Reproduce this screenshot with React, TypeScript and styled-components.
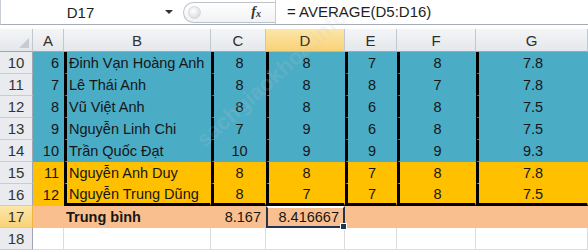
import React from "react";
import styled, { createGlobalStyle } from "styled-components";

const COLS = ["A", "B", "C", "D", "E", "F", "G"];
const WIDTHS = [33, 31, 147, 55, 79, 52, 79, 112];

const BLUE = "#4bacc6";
const ORANGE = "#ffc000";
const PEACH = "#fabf8f";

const rows = [
  { n: 10, bg: BLUE, v: ["6", "Đinh Vạn Hoàng Anh", "8", "8", "7", "8", "7.8"] },
  { n: 11, bg: BLUE, v: ["7", "Lê Thái Anh", "8", "8", "8", "7", "7.8"] },
  { n: 12, bg: BLUE, v: ["8", "Vũ Việt Anh", "8", "8", "6", "8", "7.5"] },
  { n: 13, bg: BLUE, v: ["9", "Nguyễn Linh Chi", "7", "9", "6", "8", "7.5"] },
  { n: 14, bg: BLUE, v: ["10", "Trần Quốc Đạt", "10", "9", "9", "9", "9.3"] },
  { n: 15, bg: ORANGE, v: ["11", "Nguyễn Anh Duy", "8", "8", "7", "8", "7.8"] },
  { n: 16, bg: ORANGE, v: ["12", "Nguyễn Trung Dũng", "8", "7", "7", "8", "7.5"] },
];

const App = () => {
  return (
    <>
      <GlobalStyle />
      <SheetS>
        <FormulaBarS>
          <NameBoxS>D17</NameBoxS>
          <DropArrowS />
          <FxGroupS>
            <KnobS />
            <FxS>
              f<sub>x</sub>
            </FxS>
          </FxGroupS>
          <FormulaInputS>= AVERAGE(D5:D16)</FormulaInputS>
        </FormulaBarS>
        <GapS />
        <GridS>
          <CornerS>
            <CornerMarkS />
          </CornerS>
          {COLS.map((c) => (
            <ColHeadS key={c} $active={c === "D"}>
              {c}
            </ColHeadS>
          ))}

          {rows.map((r, ri) => (
            <React.Fragment key={r.n}>
              <RowHeadS>{r.n}</RowHeadS>
              {r.v.map((val, ci) => (
                <CellS
                  key={ci}
                  $bg={r.bg}
                  $align={ci === 0 ? "right" : ci === 1 ? "left" : "center"}
                  $thickLeft={ci > 0}
                  $thickBottom={ri === rows.length - 1 && ci > 0}
                >
                  {val}
                </CellS>
              ))}
            </React.Fragment>
          ))}

          <RowHeadS $active>17</RowHeadS>
          <CellS $bg={PEACH} />
          <CellS $bg={PEACH} $align="left" $bold>
            Trung bình
          </CellS>
          <CellS $bg={PEACH} $align="right">
            8.167
          </CellS>
          <SelectedCellS $bg={PEACH} $align="right">
            8.416667
            <FillHandleS />
          </SelectedCellS>
          <CellS $bg={PEACH} />
          <CellS $bg={PEACH} />
          <CellS $bg={PEACH} />

          <RowHeadS>18</RowHeadS>
          {COLS.map((c) => (
            <CellS key={c} />
          ))}
        </GridS>
        <WatermarkS>sachgiaokhoa.info</WatermarkS>
      </SheetS>
    </>
  );
};

//style-----------------------------------------
const GlobalStyle = createGlobalStyle`
  body {
    margin: 0;
    background: #ffffff;
    font-family: "Liberation Sans", Arial, sans-serif;
  }
`;
const SheetS = styled.div`
  width: 588px;
  height: 252px;
  overflow: hidden;
  position: relative;
  background: #ffffff;
`;
const FormulaBarS = styled.div`
  display: flex;
  align-items: center;
  height: 24px;
  border-bottom: 1px solid #a5acb5;
  border-left: 1px solid #c9ced6;
  background: #ffffff;
`;
const NameBoxS = styled.div`
  width: 159px;
  text-align: center;
  font-size: 15px;
  color: #1e1e1e;
`;
const DropArrowS = styled.div`
  width: 0;
  height: 0;
  margin-left: 5px;
  border-left: 4px solid transparent;
  border-right: 4px solid transparent;
  border-top: 4px solid #333;
`;
const FxGroupS = styled.div`
  display: flex;
  align-items: center;
  justify-content: space-between;
  margin-left: 10px;
  width: 92px;
  height: 21px;
  box-sizing: border-box;
  border: 1px solid #bcc2ca;
  border-right: none;
  border-radius: 11px 0 0 11px;
  background: linear-gradient(#ffffff, #f1f2f4);
  padding: 0 14px 0 4px;
`;
const KnobS = styled.div`
  width: 11px;
  height: 11px;
  border-radius: 50%;
  background: radial-gradient(circle at 40% 35%, #ffffff, #cfd3d8);
  border: 1px solid #d6d9de;
`;
const FxS = styled.div`
  font-family: "Liberation Serif", "Times New Roman", serif;
  font-style: italic;
  font-weight: bold;
  font-size: 14px;
  color: #333;
  sub {
    font-size: 10px;
    vertical-align: -1px;
  }
`;
const FormulaInputS = styled.div`
  flex: 1;
  height: 24px;
  line-height: 24px;
  border-left: 1px solid #c6cbd2;
  padding-left: 11px;
  font-size: 15px;
  color: #1e1e1e;
`;
const GapS = styled.div`
  height: 4px;
  background: #ffffff;
`;
const GridS = styled.div`
  display: grid;
  grid-template-columns: ${WIDTHS.map((w) => `${w}px`).join(" ")};
  grid-template-rows: 23px repeat(9, 22px);
  font-size: 14.5px;
`;
const CornerS = styled.div`
  position: relative;
  background: linear-gradient(#f4f5f7, #e4e7eb);
  border-right: 1px solid #c3c8d0;
  border-bottom: 1px solid #9ea7b3;
`;
const CornerMarkS = styled.div`
  position: absolute;
  right: 3px;
  bottom: 3px;
  width: 0;
  height: 0;
  border-left: 10px solid transparent;
  border-bottom: 10px solid #c8ccd2;
`;
const ColHeadS = styled.div<{ $active?: boolean }>`
  display: flex;
  align-items: center;
  justify-content: center;
  box-sizing: border-box;
  font-size: 15px;
  background: ${(p) =>
    p.$active
      ? "linear-gradient(#fce6a9, #f9d277)"
      : "linear-gradient(#f4f5f7, #e4e7eb)"};
  border-right: 1px solid #c3c8d0;
  border-bottom: 1px solid ${(p) => (p.$active ? "#f2b33d" : "#9ea7b3")};
  color: #2f2f2f;
`;
const RowHeadS = styled.div<{ $active?: boolean }>`
  display: flex;
  align-items: center;
  justify-content: center;
  box-sizing: border-box;
  font-size: 15px;
  background: ${(p) =>
    p.$active ? "linear-gradient(#fce6a9, #f9d277)" : "#e9ebee"};
  border-right: 1px solid ${(p) => (p.$active ? "#f2b33d" : "#9ea7b3")};
  border-bottom: 1px solid #c8cdd4;
  color: #333;
`;
const CellS = styled.div<{
  $bg?: string;
  $align?: "left" | "right" | "center";
  $thickLeft?: boolean;
  $thickBottom?: boolean;
  $bold?: boolean;
}>`
  display: flex;
  align-items: center;
  justify-content: ${(p) =>
    p.$align === "left" ? "flex-start" : p.$align === "right" ? "flex-end" : "center"};
  box-sizing: border-box;
  padding: 0 4px 0 ${(p) => (p.$align === "left" ? "2px" : "4px")};
  white-space: nowrap;
  background: ${(p) => p.$bg || "#ffffff"};
  color: #161616;
  font-weight: ${(p) => (p.$bold ? "bold" : "normal")};
  border-right: 1px solid ${(p) => p.$bg || "#dadcdf"};
  border-bottom: 1px solid ${(p) => p.$bg || "#dadcdf"};
  ${(p) => (p.$thickLeft ? "border-left: 3px solid #000;" : "")}
  ${(p) => (p.$thickBottom ? "border-bottom: 3px solid #000;" : "")}
`;
const SelectedCellS = styled(CellS)`
  position: relative;
  border: 2px solid #1f3550;
  border-top-color: #ffffff;
  padding-right: 4px;
`;
const FillHandleS = styled.div`
  position: absolute;
  right: -4px;
  bottom: -4px;
  width: 5px;
  height: 5px;
  background: #1f3550;
  border: 1px solid #ffffff;
`;
const WatermarkS = styled.div`
  position: absolute;
  left: 200px;
  top: 130px;
  transform: rotate(-42deg);
  transform-origin: left center;
  font-size: 22px;
  font-weight: bold;
  color: rgba(200, 200, 200, 0.18);
  pointer-events: none;
  white-space: nowrap;
`;

export default App;
